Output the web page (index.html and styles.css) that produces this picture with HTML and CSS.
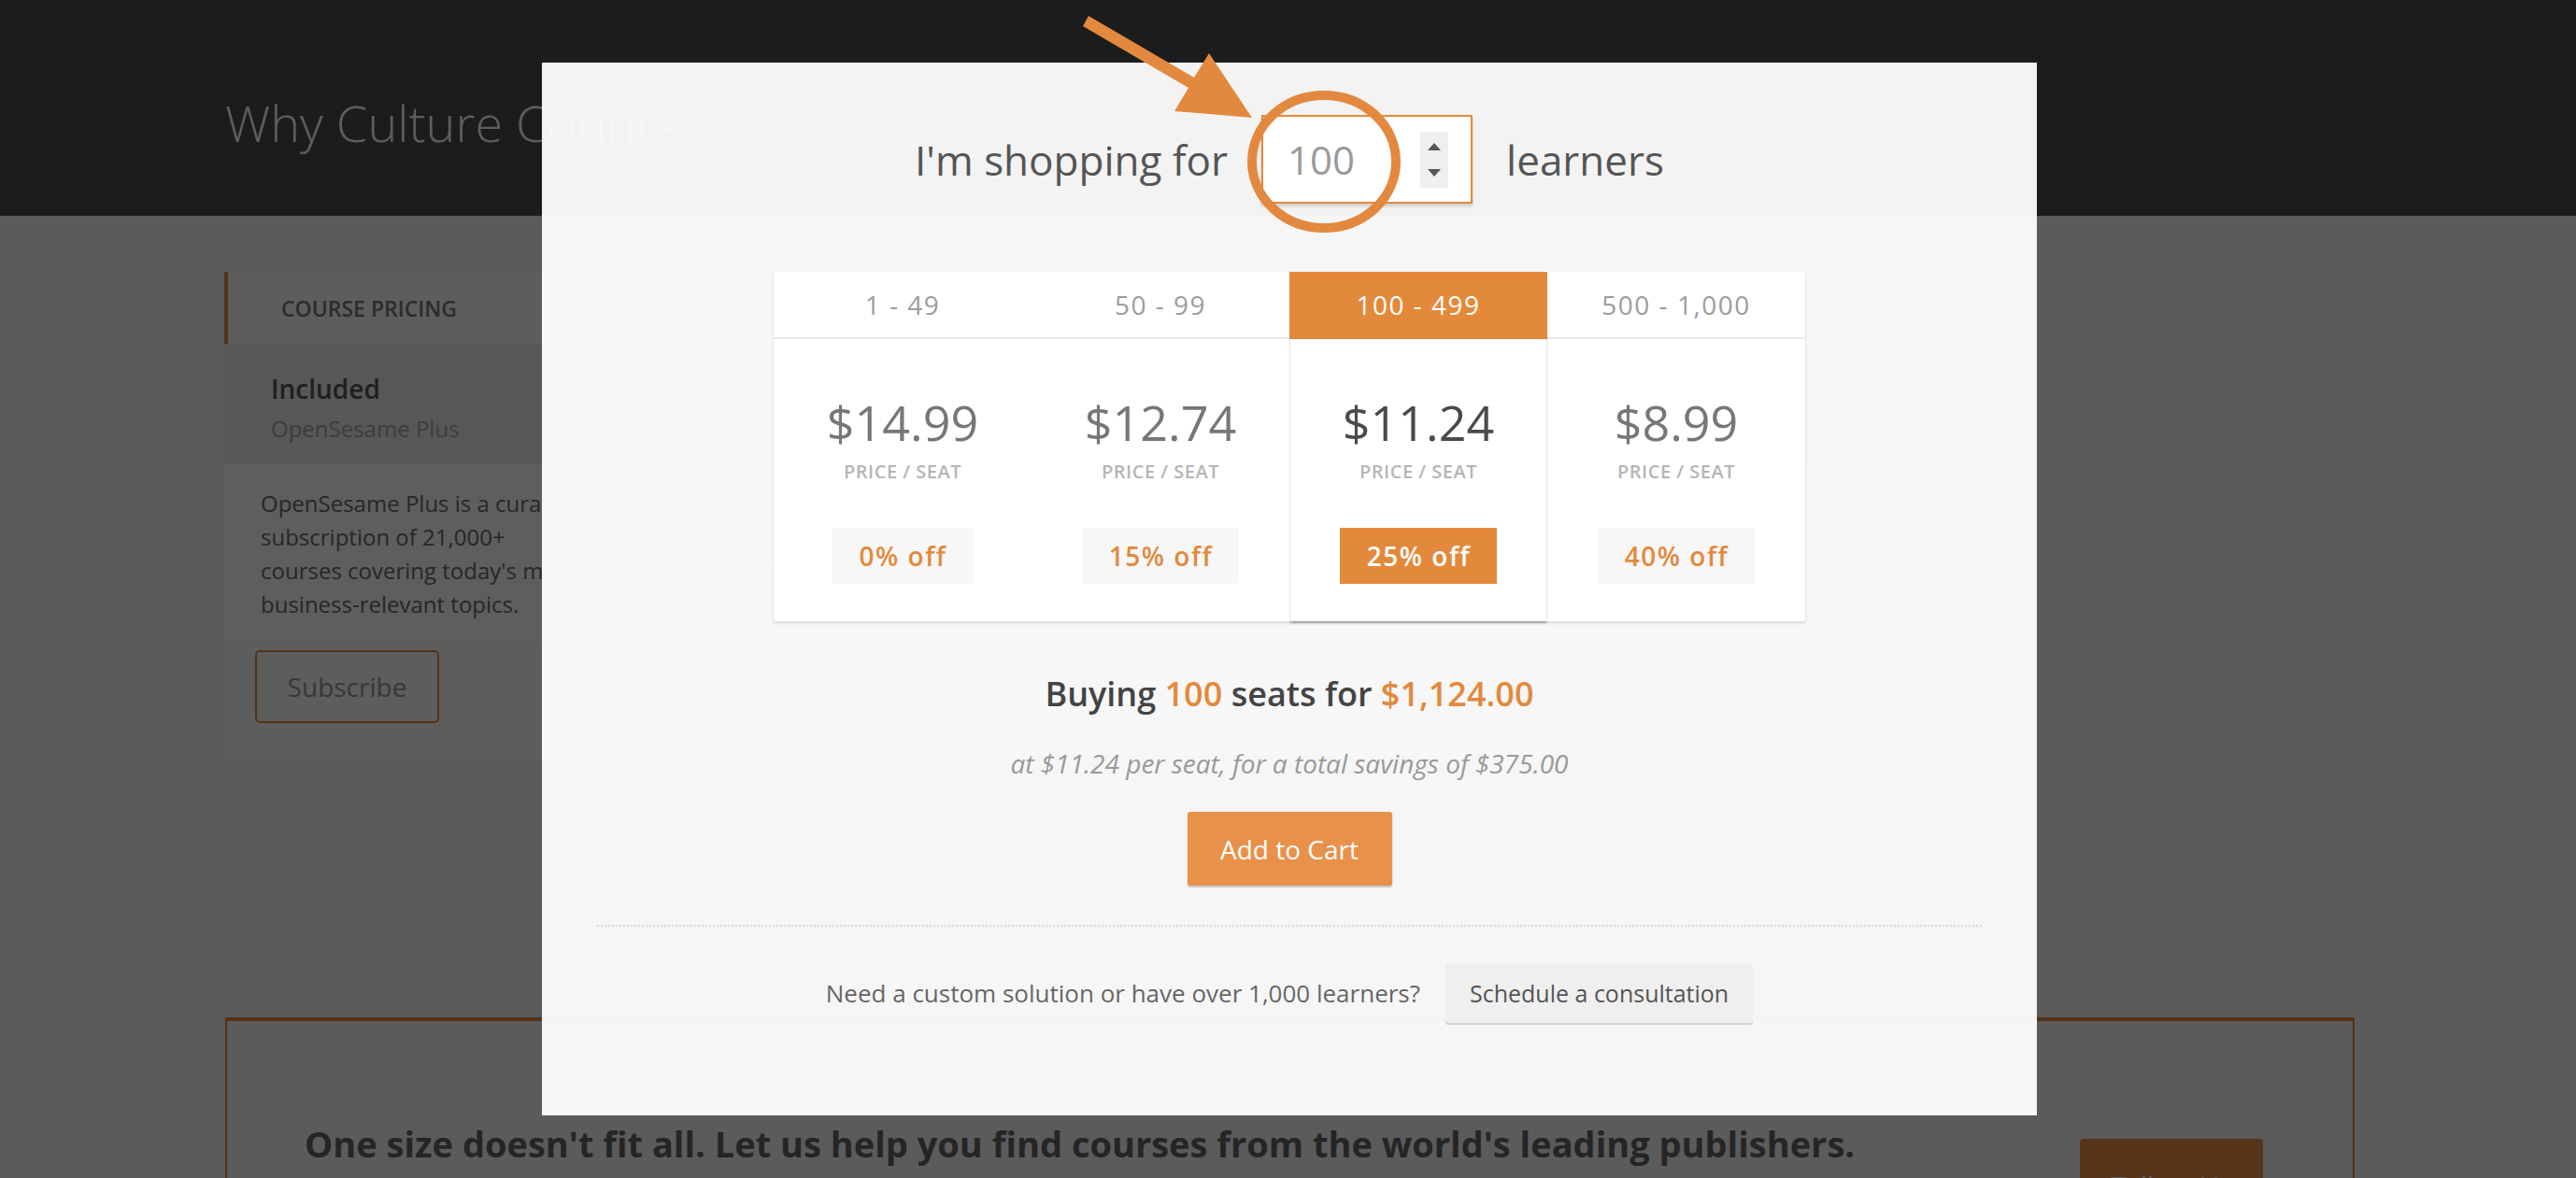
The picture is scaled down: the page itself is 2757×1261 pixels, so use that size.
FILE: index.html
```html
<!DOCTYPE html>
<html lang="en">
<head>
<meta charset="utf-8">
<title>Volume pricing</title>
<link rel="stylesheet" href="styles.css">
</head>
<body>
<div class="page">
  <header class="hero">
    <h1 class="hero-title">Why Culture Counts</h1>
    <span class="hero-from">from</span>
    <span class="hero-pub">Management Pocketbooks</span>
  </header>

  <main class="content">
    <section class="course-card">
      <div class="tabs">
        <div class="tab tab-active">COURSE PRICING</div>
      </div>
      <div class="card-grid">
        <div class="cell-head plan-head">
          <div class="plan-name">Included</div>
          <div class="plan-sub">OpenSesame Plus</div>
        </div>
        <div class="cell-head vol-head">
          <div class="vol-price">$14.99/ seat</div>
          <div class="vol-sub">Volume Pricing</div>
        </div>
        <div class="plan-body">
          <p class="plan-desc">OpenSesame Plus is a curated subscription of 21,000+ courses covering today's most business-relevant topics.</p>
          <div class="btn-outline">Subscribe</div>
        </div>
        <div class="vol-body">
          <ul class="checks">
            <li><span class="tick">✓</span>Buy just what you need</li>
            <li><span class="tick">✓</span>Discounts for volume purchases</li>
          </ul>
          <div class="vol-actions">
            <div class="bg-cart">Add to Cart</div>
            <div class="bg-touch">Get in Touch</div>
          </div>
        </div>
      </div>
    </section>

    <section class="promo">
      <p class="promo-text">One size doesn't fit all. Let us help you find courses from the world's leading publishers.</p>
      <div class="promo-btn">Talk to Us</div>
    </section>
  </main>
</div>

<div class="overlay"></div>

<div class="modal">
  <div class="shop-row">
    <span>I'm shopping for</span>
    <div class="qty">
      <span class="qty-value">100</span>
      <span class="spinner"><span class="arrow-up"></span><span class="arrow-down"></span></span>
    </div>
    <span>learners</span>
  </div>

  <div class="tiers">
    <div class="tier">
      <div class="tier-head">1 - 49</div>
      <div class="tier-body">
        <div class="price">$14.99</div>
        <div class="unit">PRICE / SEAT</div>
        <div class="badge">0% off</div>
      </div>
    </div>
    <div class="tier">
      <div class="tier-head">50 - 99</div>
      <div class="tier-body">
        <div class="price">$12.74</div>
        <div class="unit">PRICE / SEAT</div>
        <div class="badge">15% off</div>
      </div>
    </div>
    <div class="tier tier-selected">
      <div class="tier-head">100 - 499</div>
      <div class="tier-body">
        <div class="price">$11.24</div>
        <div class="unit">PRICE / SEAT</div>
        <div class="badge">25% off</div>
      </div>
    </div>
    <div class="tier">
      <div class="tier-head">500 - 1,000</div>
      <div class="tier-body">
        <div class="price">$8.99</div>
        <div class="unit">PRICE / SEAT</div>
        <div class="badge">40% off</div>
      </div>
    </div>
  </div>

  <div class="summary">Buying <span class="hl">100</span> seats for <span class="hl">$1,124.00</span></div>
  <div class="savings">at $11.24 per seat, for a total savings of $375.00</div>
  <div class="add-cart">Add to Cart</div>

  <div class="divider"></div>

  <div class="consult-row">
    <span class="consult-text">Need a custom solution or have over 1,000 learners?</span>
    <span class="consult-btn">Schedule a consultation</span>
  </div>
</div>

<svg class="annotation" width="2757" height="1261" viewBox="0 0 2757 1261" xmlns="http://www.w3.org/2000/svg">
  <polygon points="1165,17 1278,83 1294,57 1340,126 1257,119 1272,94 1159,28" fill="#e3893f"/>
  <ellipse cx="1417" cy="173" rx="77" ry="71" fill="none" stroke="#e3893f" stroke-width="10"/>
</svg>
</body>
</html>
```

FILE: styles.css
```css
html, body {
  margin: 0;
  padding: 0;
}

body {
  width: 2757px;
  height: 1261px;
  overflow: hidden;
  position: relative;
  background: #f6f6f6;
  font-family: "Open Sans", "Liberation Sans", sans-serif;
}

/* ---------- background page ---------- */
.page {
  width: 2757px;
}

.hero {
  height: 231px;
  box-sizing: border-box;
  background: #4c4c4c;
  padding: 99px 0 0 241px;
  display: flex;
  align-items: baseline;
  color: #fcfcfc;
}

.hero-title {
  margin: 0;
  font-size: 54px;
  font-weight: 300;
  line-height: 1.2;
}

.hero-from {
  margin-left: 30px;
  font-size: 28px;
  font-style: italic;
  font-weight: 300;
}

.hero-pub {
  margin-left: 22px;
  font-size: 28px;
  font-style: italic;
  font-weight: 300;
}

.content {
  padding: 60px 0 0 240px;
}

.course-card {
  width: 1720px;
  background: #fbfbfb;
}

.tabs {
  height: 77px;
  display: flex;
}

.tab {
  display: flex;
  align-items: center;
  padding-left: 57px;
  font-size: 23px;
  font-weight: 600;
  color: #777;
}

.tab-active {
  border-left: 4px solid #e3893b;
  width: 300px;
}

.card-grid {
  display: grid;
  grid-template-columns: 428px 1fr;
}

.cell-head {
  height: 129px;
  box-sizing: border-box;
  background: #ebebeb;
}

.plan-head {
  padding: 30px 0 0 50px;
}

.plan-name {
  font-size: 28px;
  font-weight: 600;
  line-height: 36px;
  color: #555;
}

.plan-sub {
  margin-top: 8px;
  font-size: 24px;
  line-height: 34px;
  color: #a5a5a5;
}

.vol-head {
  padding: 28px 0 0 52px;
}

.vol-price {
  font-size: 30px;
  line-height: 42px;
  color: #c4c4c4;
}

.vol-sub {
  font-size: 26px;
  line-height: 40px;
  color: #d0d0d0;
}

.plan-desc {
  margin: 0;
  padding: 24px 39px;
  background: #fefefe;
  font-size: 24px;
  line-height: 36px;
  color: #6a6a6a;
}

.btn-outline {
  margin: 7px 0 34px 33px;
  width: 197px;
  height: 78px;
  box-sizing: border-box;
  border: 2px solid #e3893b;
  border-radius: 5px;
  display: flex;
  align-items: center;
  justify-content: center;
  font-size: 28px;
  color: #999;
}

.vol-body {
  padding: 31px 0 0 35px;
}

.checks {
  list-style: none;
  margin: 0;
  padding: 0;
  font-size: 28px;
  line-height: 50px;
  color: #d0d0d0;
}

.tick {
  display: inline-block;
  width: 45px;
  color: #d4d4d4;
}

.vol-actions {
  margin-top: 67px;
  display: flex;
}

.bg-cart {
  width: 215px;
  height: 78px;
  background: #f0c8a4;
  color: #fff;
  border-radius: 4px;
  display: flex;
  align-items: center;
  justify-content: center;
  font-size: 28px;
}

.bg-touch {
  margin-left: 644px;
  width: 235px;
  height: 80px;
  box-sizing: border-box;
  border: 2px solid #e6e6e6;
  border-radius: 4px;
  display: flex;
  align-items: center;
  justify-content: center;
  font-size: 28px;
  color: #d0d0d0;
}

.promo {
  margin-top: 281px;
  margin-left: 1px;
  width: 2279px;
  height: 300px;
  box-sizing: border-box;
  border: 2px solid #e3893b;
  border-top-width: 4px;
  padding: 106px 96px 0 83px;
  display: flex;
  justify-content: space-between;
  align-items: flex-start;
}

.promo-text {
  margin: 0;
  font-size: 38px;
  font-weight: 700;
  line-height: 50px;
  color: #666;
}

.promo-btn {
  margin-top: 20px;
  width: 196px;
  height: 80px;
  background: #e8914b;
  border-radius: 4px;
  color: #fff;
  font-size: 28px;
  display: flex;
  align-items: center;
  justify-content: center;
  padding-top: 20px;
  box-sizing: border-box;
}

/* ---------- overlay ---------- */
.overlay {
  position: absolute;
  inset: 0;
  background: rgba(0, 0, 0, 0.63);
}

/* ---------- modal ---------- */
.modal {
  position: absolute;
  left: 580px;
  top: 67px;
  width: 1600px;
  height: 1127px;
  box-sizing: border-box;
  padding: 56px 59px 0;
  background: rgba(255, 255, 255, 0.95);
  color: #555;
}

.shop-row {
  height: 95px;
  display: flex;
  align-items: center;
  justify-content: center;
  gap: 36px;
  font-size: 44px;
  color: #555;
}

.qty {
  width: 226px;
  height: 95px;
  box-sizing: border-box;
  border: 2px solid #e3893b;
  background: #fff;
  box-shadow: 0 3px 3px rgba(0, 0, 0, 0.15);
  display: flex;
  align-items: center;
  justify-content: space-between;
  padding: 0 24px 0 26px;
}

.qty-value {
  font-size: 42px;
  color: #9a9a9a;
}

.spinner {
  width: 30px;
  height: 60px;
  box-sizing: border-box;
  padding: 12px 0;
  background: #efefef;
  display: flex;
  flex-direction: column;
  align-items: center;
  justify-content: space-between;
}

.arrow-up {
  width: 0;
  height: 0;
  border-left: 7px solid transparent;
  border-right: 7px solid transparent;
  border-bottom: 8px solid #555;
}

.arrow-down {
  width: 0;
  height: 0;
  border-left: 7px solid transparent;
  border-right: 7px solid transparent;
  border-top: 8px solid #555;
}

.tiers {
  width: 1104px;
  margin: 73px auto 0;
  display: grid;
  grid-template-columns: repeat(4, 1fr);
  background: #fff;
  box-shadow: 0 2px 3px rgba(0, 0, 0, 0.12);
}

.tier {
  text-align: center;
}

.tier-head {
  height: 72px;
  box-sizing: border-box;
  border-bottom: 2px solid #e9e9e9;
  display: flex;
  align-items: center;
  justify-content: center;
  font-size: 28px;
  letter-spacing: 1.5px;
  color: #9c9c9c;
}

.tier-body {
  padding: 58px 0 40px;
}

.price {
  font-size: 52px;
  line-height: 62px;
  color: #777;
}

.unit {
  margin-top: 10px;
  font-size: 20px;
  font-weight: 600;
  line-height: 24px;
  letter-spacing: 0.5px;
  color: #b5b5b5;
}

.badge {
  margin-top: 48px;
  display: inline-block;
  height: 60px;
  line-height: 60px;
  padding: 0 28px 0 29px;
  background: #f7f7f7;
  font-size: 28px;
  font-weight: 600;
  letter-spacing: 1.5px;
  color: #e3893b;
}

.tier-selected {
  position: relative;
  z-index: 1;
  box-shadow: 0 3px 2px -1px rgba(0, 0, 0, 0.3);
}

.tier-selected .tier-head {
  background: #e3893b;
  border-bottom-color: #e3893b;
  color: #fff;
}

.tier-selected .tier-body {
  box-shadow: inset 1px 0 0 #e6e6e6, inset -1px 0 0 #e6e6e6;
}

.tier-selected .price {
  color: #4a4a4a;
}

.tier-selected .badge {
  background: #e3893b;
  color: #fff;
}

.summary {
  margin-top: 55px;
  text-align: center;
  font-size: 36px;
  font-weight: 600;
  line-height: 46px;
  color: #444;
}

.hl {
  color: #e3893b;
}

.savings {
  margin-top: 33px;
  text-align: center;
  font-size: 28px;
  font-style: italic;
  line-height: 36px;
  color: #999;
}

.add-cart {
  margin: 34px auto 0;
  width: 219px;
  height: 79px;
  box-sizing: border-box;
  background: #e8914b;
  border-radius: 3px;
  box-shadow: 0 2px 2px rgba(0, 0, 0, 0.2);
  display: flex;
  align-items: center;
  justify-content: center;
  font-size: 28px;
  color: #fff;
}

.divider {
  margin-top: 42px;
  border-top: 2px dotted #dadada;
}

.consult-row {
  margin-top: 39px;
  display: flex;
  align-items: center;
  justify-content: center;
  gap: 27px;
}

.consult-text {
  font-size: 26px;
  color: #666;
}

.consult-btn {
  height: 64px;
  padding: 0 26px;
  display: flex;
  align-items: center;
  background: #efefef;
  border-radius: 3px;
  box-shadow: 0 2px 0 #d2d2d2;
  font-size: 25px;
  color: #555;
}

/* ---------- annotation ---------- */
.annotation {
  position: absolute;
  left: 0;
  top: 0;
  pointer-events: none;
}
```
